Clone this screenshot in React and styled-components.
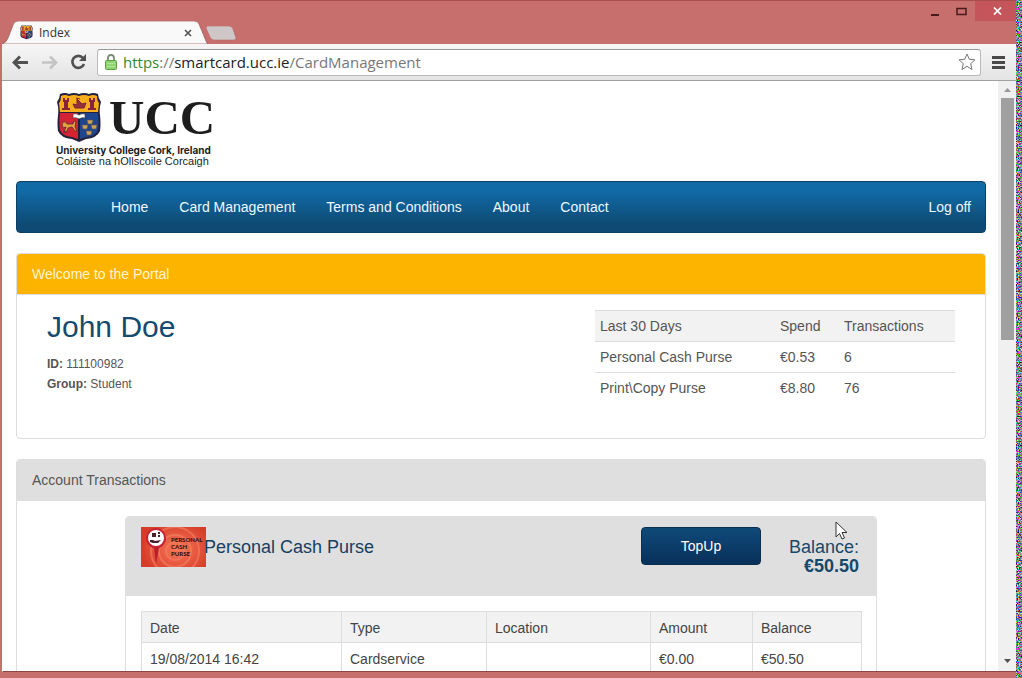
import React from "react";
import styled, { createGlobalStyle } from "styled-components";

const GlobalStyle = createGlobalStyle`
  * { box-sizing: border-box; }
  body {
    margin: 0;
    overflow: hidden;
    font-family: "Liberation Sans", Arial, sans-serif;
    font-size: 14px;
    line-height: 20px;
    color: #555;
  }
`;

const Desktop = styled.div`
  display: flex;
  height: 100vh;
`;

const Grain = styled.svg`
  flex: none;
  width: 6px;
  height: 100%;
`;

const Window = styled.div`
  flex: 1;
  min-width: 0;
  display: flex;
  flex-direction: column;
  background: #c76f6c;
  border-top: 1px solid #a94d4c;
`;

const TitleBar = styled.header`
  display: flex;
  justify-content: space-between;
  height: 43px;
  flex: none;
`;

const Tabs = styled.div`
  display: flex;
  align-items: flex-end;
  padding-left: 2px;
`;

const Tab = styled.div`
  position: relative;
  display: flex;
  align-items: center;
  gap: 6px;
  width: 206px;
  height: 23px;
  padding: 0 15px 0 18px;
  font-family: "Open Sans", "Noto Sans", sans-serif;
  font-size: 12px;
  color: #333;
`;

const TabShape = styled.svg`
  position: absolute;
  inset: 0;
`;

const TabTitle = styled.span`
  position: relative;
  flex: 1;
`;

const TabIcon = styled.svg`
  position: relative;
  flex: none;
`;

const PlainButton = styled.button`
  position: relative;
  display: flex;
  align-items: center;
  justify-content: center;
  flex: none;
  width: ${(p) => p.$w}px;
  height: ${(p) => p.$h}px;
  padding: 0;
  border: 0;
  background: ${(p) => p.$bg || "transparent"};
`;

const NewTab = styled(PlainButton)`
  margin-bottom: 3px;
  margin-left: -3px;
`;

const CloseButton = styled(PlainButton)`
  padding-left: 4px;
`;

const WindowButtons = styled.div`
  display: flex;
`;

const Toolbar = styled.div`
  display: flex;
  align-items: center;
  gap: 2px;
  flex: none;
  height: 37px;
  margin-left: 2px;
  padding: 0 3px 0 5px;
  background: linear-gradient(#f6f6f6, #e4e4e4);
  border-bottom: 1px solid #a0a0a0;
`;

const AddressBar = styled.div`
  display: flex;
  align-items: center;
  flex: 1;
  gap: 5px;
  height: 27px;
  margin-left: 3px;
  padding: 0 4px 0 6px;
  background: #fff;
  border: 1px solid #bbb;
  border-top-color: #999;
  border-radius: 3px;
`;

const Url = styled.span`
  flex: 1;
  font-family: "Open Sans", "Noto Sans", sans-serif;
  font-size: 15px;
  color: #777;
  b { font-weight: 400; color: #222; }
  i { font-style: normal; color: #2f8a2f; }
`;

const Viewport = styled.div`
  display: flex;
  flex: 1;
  min-height: 0;
  margin: 0 0 6px 2px;
  border-left: 1px solid #fff;
  border-bottom: 1px solid #8d4646;
  background: #fff;
`;

const Page = styled.main`
  flex: 1;
  min-width: 0;
  overflow: hidden;
  padding: 12px 12px 0 13px;
`;

const Scrollbar = styled.div`
  display: flex;
  flex-direction: column;
  align-items: center;
  width: 18px;
  flex: none;
  padding: 6px 0 7px;
  background: #f0f0f0;
`;

const Thumb = styled.div`
  width: 13px;
  height: 42%;
  margin: 6px 0 auto;
  background: #a0a0a0;
`;

const Logo = styled.a`
  display: block;
  width: 160px;
  height: 76px;
  margin-left: 40px;
  color: #1d1d1d;
  text-decoration: none;
`;

const LogoTop = styled.span`
  display: flex;
  gap: 7px;
  height: 52px;
`;

const Wordmark = styled.span`
  font-family: "Liberation Serif", serif;
  font-size: 49px;
  font-weight: 700;
  line-height: 50px;
`;

const LogoLine = styled.span`
  display: block;
  font-family: ${(p) => (p.$bold ? "Inter, " : "")}"Liberation Sans", sans-serif;
  font-size: ${(p) => (p.$bold ? 10 : 11)}px;
  font-weight: ${(p) => (p.$bold ? 700 : 400)};
  line-height: 11px;
  white-space: nowrap;
`;

const Nav = styled.nav`
  display: flex;
  align-items: center;
  gap: 31px;
  height: 52px;
  margin: 12px 0 20px;
  padding: 0 14px 0 94px;
  border: 1px solid #0e4063;
  border-radius: 4px;
  background: linear-gradient(#1169a5 20%, #0e4a73 85%);
`;

const NavLink = styled.a`
  color: #eef8ff;
  text-decoration: none;
  margin-left: ${(p) => (p.$end ? "auto" : "0")};
`;

const Panel = styled.section`
  margin-bottom: 20px;
  border: 1px solid #ddd;
  border-radius: 4px;
  overflow: hidden;
  background: #fff;
`;

const PanelHeading = styled.h2`
  margin: 0;
  padding: 10px 15px;
  font-size: 14px;
  font-weight: 400;
  line-height: 20px;
  color: ${(p) => (p.$accent ? "#fff3cf" : "#555")};
  background: ${(p) => (p.$accent ? "#fdb400" : "#dfdfdf")};
  border-bottom: 1px solid #ddd;
`;

const Profile = styled.div`
  display: flex;
  justify-content: space-between;
  align-items: flex-start;
  min-height: 143px;
  padding: 15px 30px;
`;

const Name = styled.h1`
  margin: 0 0 10px;
  font-size: 30px;
  font-weight: 400;
  line-height: 34px;
  color: #164a70;
`;

const Detail = styled.p`
  margin: 0;
  font-size: 12px;
  line-height: 20px;
`;

const StatsTable = styled.table`
  width: 360px;
  table-layout: fixed;
  border-collapse: collapse;
  th, td {
    height: 31px;
    padding: 5px;
    text-align: left;
    font-weight: 400;
    border-top: 1px solid #ddd;
  }
  th { background: #f2f2f2; }
`;

const Accounts = styled.div`
  padding: 15px 14px;
`;

const Purse = styled(Panel)`
  width: 80%;
  margin: 0 auto;
`;

const PurseHeading = styled.header`
  display: flex;
  align-items: flex-start;
  height: 79px;
  padding: 10px 15px;
  background: #dfdfdf;
`;

const PurseTitle = styled.h3`
  flex: 1;
  margin: 0 0 0 -2px;
  font-size: 18px;
  font-weight: 400;
  line-height: 40px;
  color: #16405f;
`;

const TopUp = styled.button`
  width: 120px;
  height: 38px;
  padding: 0;
  font: 14px "Liberation Sans", Arial, sans-serif;
  color: #fff;
  border: 1px solid #0a2e4e;
  border-radius: 4px;
  background: linear-gradient(#0f4a78, #08305a);
`;

const Balance = styled.div`
  position: relative;
  width: 100px;
  padding: 11px 2px 0 0;
  text-align: right;
  font-size: 18px;
  line-height: 19px;
  color: #16486b;
  strong { display: block; }
`;

const Pointer = styled.svg`
  position: absolute;
  top: -6px;
  right: 13px;
`;

const PurseBody = styled.div`
  padding: 15px;
`;

const Transactions = styled.table`
  width: 100%;
  table-layout: fixed;
  border-collapse: collapse;
  color: #444;
  th, td {
    height: 31px;
    padding: 6px 8px 4px;
    text-align: left;
    font-weight: 400;
    border: 1px solid #ddd;
    white-space: nowrap;
  }
  th { background: #f2f2f2; }
`;

const Crest = ({ width, height, icon: Wrap = "svg" }) => (
  <Wrap width={width} height={height} viewBox="0 0 46 50" aria-hidden="true">
    <path d="M4 1Q9 -1 13 1Q18 -1 23 1Q28 -1 33 1Q37 -1 42 1Q42 5 45 9Q43 16 44 22Q45 31 44 38Q41 45 30 46L23 49L16 46Q5 45 2 38Q1 31 2 22Q3 16 1 9Q4 5 4 1Z" fill="#25213c" />
    <path d="M5 3Q9 1 13 3Q18 1 23 3Q28 1 33 3Q37 1 41 3Q41 8 43 10L42 19H4L3 10Q5 8 5 3Z" fill="#f7ae1d" />
    <path d="M4 20H22V46L16 44Q6 43 4 37Q3 30 4 20Z" fill="#d32435" />
    <path d="M24 20H42Q43 30 42 37Q40 43 30 44L24 46Z" fill="#20458f" />
    <path d="M7 5h2v2h2V5h2v4h-1v6h2v2H6v-2h2V9H7zM33 5h2v2h2V5h2v4h-1v6h2v2h-8v-2h2V9h-1z" fill="#87243b" />
    <path d="M17 11l4 1V6l5 5 4-1-2 5h-9zM20 5l4 1" fill="#963039" stroke="#7b2037" />
    <path d="M17 21q3-1 6 1q3-2 6-1v4q-3-1-6 1q-3-2-6-1z" fill="#fff" stroke="#333" strokeWidth=".6" />
    <path d="M6 31q1-3 4-2l1 2 6 0 1-3 2 1-1 5 2 4h-2l-3-4-4 1-1 4H8l2-5-3 1zM7 39l4-1" fill="#e3a23d" stroke="#5e2631" strokeWidth=".8" />
    <path d="M31 27h6l-1 4h-4zM26 32h6l-1 4h-4zM35 32h6l-1 4h-4zM30 38h6l-1 4h-4z" fill="#c9a356" stroke="#5b5144" strokeWidth=".6" />
  </Wrap>
);

const PurseCard = () => (
  <svg width="65" height="40" viewBox="0 0 65 40" role="img" aria-label="Personal Cash Purse">
    <defs>
      <radialGradient id="glow"><stop offset="0" stopColor="#fa7959" /><stop offset="1" stopColor="#d63c2a" /></radialGradient>
    </defs>
    <rect width="65" height="40" fill="#d63c2a" />
    <ellipse cx="36" cy="22" rx="36" ry="28" fill="url(#glow)" />
    <g fill="none" stroke="#f58366" strokeWidth="2" opacity=".6">
      <circle cx="34" cy="24" r="9" /><circle cx="34" cy="24" r="16" /><circle cx="34" cy="24" r="24" />
    </g>
    <path d="M6 13Q8 20 13 21L15 37L18 21Q23 19 25 12Z" fill="#b91f2b" />
    <circle cx="15" cy="11" r="9" fill="#fff" stroke="#c62332" strokeWidth="2" />
    <path d="M11 6h4v4h-4zM17 5h2v2h-2zM17 8h2v2h-2zM9 13h3l2 1 6-1-3 3h-5l-3-1z" fill="#4c2028" />
    <g fill="#3b1113" fontFamily="Lato, sans-serif" fontWeight="900" fontSize="6">
      <text x="30" y="15">PERSONAL</text><text x="30" y="22">CASH</text><text x="30" y="29">PURSE</text>
    </g>
  </svg>
);

const links = ["Home", "Card Management", "Terms and Conditions", "About", "Contact"];
const stats = [["Personal Cash Purse", "€0.53", "6"], ["Print\\Copy Purse", "€8.80", "76"]];
const columns = [["Date", 200], ["Type", 145], ["Location", 164], ["Amount", 102], ["Balance", 109]];
const rows = [["19/08/2014 16:42", "Cardservice", "", "€0.00", "€50.50"]];

export default function App() {
  return (
    <Desktop>
      <GlobalStyle />
      <Window>
        <TitleBar>
          <Tabs>
            <Tab>
              <TabShape width="206" height="23" viewBox="0 0 206 23" aria-hidden="true">
                <path d="M0 23Q4 22 6 17L11 4Q12 0 16 0H192Q196 0 197 3L204 20Q205 23 206 23Z" fill="#f9f9f9" stroke="#9b5553" strokeWidth=".7" />
              </TabShape>
              <Crest width={13} height={15} icon={TabIcon} />
              <TabTitle>Index</TabTitle>
              <PlainButton $w={10} $h={10} aria-label="Close tab">
                <svg width="8" height="8" viewBox="0 0 8 8"><path d="M1 1l6 6M7 1L1 7" stroke="#555" strokeWidth="1.7" /></svg>
              </PlainButton>
            </Tab>
            <NewTab $w={32} $h={15} aria-label="New tab">
              <svg width="32" height="15" viewBox="0 0 32 15"><path d="M3 0H24Q27 0 28 3L31 12Q31 14 29 14H9Q6 14 5 11L1 2Q1 0 3 0Z" fill="#cfc6c8" stroke="#b76866" strokeWidth=".6" /></svg>
            </NewTab>
          </Tabs>
          <WindowButtons>
            <PlainButton $w={27} $h={21} aria-label="Minimize">
              <svg width="10" height="12" viewBox="0 0 10 12"><path d="M1 9h8" stroke="#491a1b" strokeWidth="2" /></svg>
            </PlainButton>
            <PlainButton $w={27} $h={21} aria-label="Maximize">
              <svg width="11" height="9" viewBox="0 0 11 9"><path d="M1 1.500h9v6H1z" fill="none" stroke="#491a1b" strokeWidth="1.500" /></svg>
            </PlainButton>
            <CloseButton $w={41} $h={20} $bg="#c4555a" aria-label="Close">
              <svg width="9" height="8" viewBox="0 0 9 8"><path d="M1 .5l7 7M8 .5l-7 7" stroke="#fff" strokeWidth="1.700" /></svg>
            </CloseButton>
          </WindowButtons>
        </TitleBar>
        <Toolbar>
          <PlainButton $w={27} $h={27} aria-label="Back">
            <svg width="17" height="15" viewBox="0 0 17 15"><path d="M8 1.500L2 7.500l6 6M2 7.500h14" fill="none" stroke="#505050" strokeWidth="2.800" /></svg>
          </PlainButton>
          <PlainButton $w={27} $h={27} aria-label="Forward">
            <svg width="17" height="15" viewBox="0 0 17 15"><path d="M9 1.500l6 6-6 6M15 7.500H1" fill="none" stroke="#c4c4c4" strokeWidth="2.600" /></svg>
          </PlainButton>
          <PlainButton $w={27} $h={27} aria-label="Reload">
            <svg width="17" height="16" viewBox="0 0 17 16"><path d="M13 4A6 6 0 1 0 14 10" fill="none" stroke="#505050" strokeWidth="2.600" /><path d="M16 0v7H9z" fill="#505050" /></svg>
          </PlainButton>
          <AddressBar>
            <svg width="14" height="17" viewBox="0 0 14 17" aria-hidden="true">
              <path d="M4 8V4q0-3 3-3t3 3v4" fill="none" stroke="#7d8c76" strokeWidth="1.800" />
              <rect x="1.500" y="6.500" width="11" height="9" rx="1" fill="#8fd373" stroke="#5a9f46" />
              <path d="M3 9.500h8M3 12.500h8" stroke="#b3e69d" />
            </svg>
            <Url><i>https</i>://<b>smartcard.ucc.ie</b>/CardManagement</Url>
            <PlainButton $w={18} $h={20} aria-label="Bookmark">
              <svg width="18" height="18" viewBox="0 0 18 18"><path d="M9 1l2.300 5.300 5.700.5-4.300 3.800 1.300 5.900-5-3.200-5 3.200 1.300-5.900L1 6.800l5.700-.5z" fill="#fff" stroke="#777" strokeLinejoin="round" /></svg>
            </PlainButton>
          </AddressBar>
          <PlainButton $w={30} $h={27} aria-label="Menu">
            <svg width="13" height="13" viewBox="0 0 13 13"><path d="M0 1.500h13M0 6.500h13M0 11.500h13" stroke="#484848" strokeWidth="3" /></svg>
          </PlainButton>
        </Toolbar>
        <Viewport>
          <Page>
            <Logo href="#" aria-label="University College Cork">
              <LogoTop>
                <Crest width={46} height={50} />
                <Wordmark>UCC</Wordmark>
              </LogoTop>
              <LogoLine $bold>University College Cork, Ireland</LogoLine>
              <LogoLine>Coláiste na hOllscoile Corcaigh</LogoLine>
            </Logo>
            <Nav>
              {links.map((l) => <NavLink href="#" key={l}>{l}</NavLink>)}
              <NavLink href="#" $end>Log off</NavLink>
            </Nav>
            <Panel>
              <PanelHeading $accent>Welcome to the Portal</PanelHeading>
              <Profile>
                <div>
                  <Name>John Doe</Name>
                  <Detail><b>ID:</b> 111100982</Detail>
                  <Detail><b>Group:</b> Student</Detail>
                </div>
                <StatsTable>
                  <colgroup><col width="180" /><col width="64" /><col width="116" /></colgroup>
                  <thead><tr><th>Last 30 Days</th><th>Spend</th><th>Transactions</th></tr></thead>
                  <tbody>
                    {stats.map((r) => <tr key={r[0]}>{r.map((c) => <td key={c}>{c}</td>)}</tr>)}
                  </tbody>
                </StatsTable>
              </Profile>
            </Panel>
            <Panel>
              <PanelHeading>Account Transactions</PanelHeading>
              <Accounts>
                <Purse>
                  <PurseHeading>
                    <PurseCard />
                    <PurseTitle>Personal Cash Purse</PurseTitle>
                    <TopUp type="button">TopUp</TopUp>
                    <Balance>
                      Balance: <strong>€50.50</strong>
                      <Pointer width="13" height="19" viewBox="0 0 13 19" aria-hidden="true">
                        <path d="M1 1v15l3.500-3.500 2.500 5.500 2.500-1-2.500-5.500h5z" fill="#fff" stroke="#333" />
                      </Pointer>
                    </Balance>
                  </PurseHeading>
                  <PurseBody>
                    <Transactions>
                      <colgroup>{columns.map(([c, w]) => <col key={c} width={w} />)}</colgroup>
                      <thead><tr>{columns.map(([c]) => <th key={c}>{c}</th>)}</tr></thead>
                      <tbody>
                        {rows.map((r) => <tr key={r[0]}>{r.map((c, i) => <td key={i}>{c}</td>)}</tr>)}
                      </tbody>
                    </Transactions>
                  </PurseBody>
                </Purse>
              </Accounts>
            </Panel>
          </Page>
          <Scrollbar aria-hidden="true">
            <svg width="7" height="5" viewBox="0 0 7 5"><path d="M0 5L3.500 1 7 5z" fill="#999" /></svg>
            <Thumb />
            <svg width="7" height="5" viewBox="0 0 7 5"><path d="M0 0h7L3.500 4z" fill="#505050" /></svg>
          </Scrollbar>
        </Viewport>
      </Window>
      <Grain aria-hidden="true">
        <filter id="grain" x="0" y="0" width="100%" height="100%" colorInterpolationFilters="sRGB">
          <feTurbulence type="fractalNoise" baseFrequency=".8" numOctaves="2" seed="4" />
          <feColorMatrix values="2.500 0 0 0 -.75  0 2.500 0 0 -.75  0 0 2.500 0 -.7  0 0 0 0 1" />
        </filter>
        <rect width="100%" height="100%" filter="url(#grain)" />
      </Grain>
    </Desktop>
  );
}
